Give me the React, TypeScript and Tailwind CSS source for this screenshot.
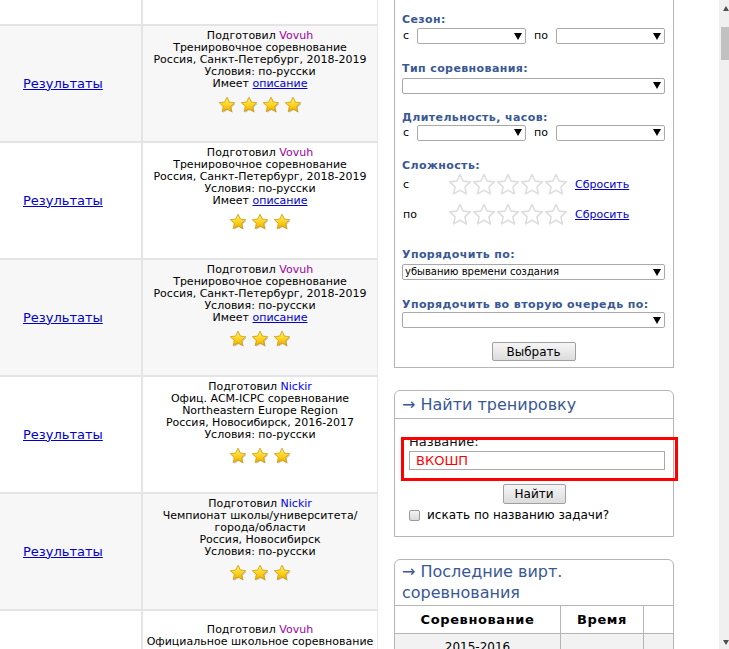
import React from 'react'

const rows = [
  { gray: true, author: 'Vovuh', authorColor: 'text-[#a000a0]', lines: ['Тренировочное соревнование', 'Россия, Санкт-Петербург, 2018-2019', 'Условия: по-русски'], desc: true, stars: 4, pt: 'pt-[4px]', link: true },
  { gray: false, author: 'Vovuh', authorColor: 'text-[#a000a0]', lines: ['Тренировочное соревнование', 'Россия, Санкт-Петербург, 2018-2019', 'Условия: по-русски'], desc: true, stars: 3, pt: 'pt-[4px]', link: true },
  { gray: true, author: 'Vovuh', authorColor: 'text-[#a000a0]', lines: ['Тренировочное соревнование', 'Россия, Санкт-Петербург, 2018-2019', 'Условия: по-русски'], desc: true, stars: 3, pt: 'pt-[4px]', link: true },
  { gray: false, author: 'Nickir', authorColor: 'text-[#0000ff]', lines: ['Офиц. ACM-ICPC соревнование', 'Northeastern Europe Region', 'Россия, Новосибирск, 2016-2017', 'Условия: по-русски'], desc: false, stars: 3, pt: 'pt-[4px]', link: true },
  { gray: true, author: 'Nickir', authorColor: 'text-[#0000ff]', lines: ['Чемпионат школы/университета/', 'города/области', 'Россия, Новосибирск', 'Условия: по-русски'], desc: false, stars: 3, pt: 'pt-[4px]', link: true },
  { gray: false, author: 'Vovuh', authorColor: 'text-[#a000a0]', lines: ['Официальное школьное соревнование'], desc: false, stars: 0, pt: 'pt-[13px]', link: false },
]

const STAR = 'M12 1.5l3.1 6.6 7.2.8-5.4 4.9 1.5 7.1L12 17.3l-6.4 3.6 1.5-7.1-5.4-4.9 7.2-.8z'

function GoldStar() {
  return (
    <svg width="18" height="18" viewBox="0 0 24 24">
      <defs>
        <linearGradient id="gold" x1="0" y1="0" x2="0" y2="1">
          <stop offset="0" stopColor="#fff27a" />
          <stop offset="0.55" stopColor="#ffd21c" />
          <stop offset="1" stopColor="#f0a800" />
        </linearGradient>
      </defs>
      <path d={STAR} fill="#9a9a9a" opacity="0.55" transform="translate(1.2 1.4)" />
      <path d={STAR} fill="url(#gold)" stroke="#c99a00" strokeWidth="1" strokeLinejoin="round" />
    </svg>
  )
}

function EmptyStar() {
  return (
    <svg width="24" height="24" viewBox="0 0 24 24">
      <path d={STAR} fill="#fff" stroke="#dedede" strokeWidth="1.6" strokeLinejoin="round" />
    </svg>
  )
}

function Select({ w, text }: { w: string; text?: string }) {
  return (
    <div className={`${w} h-[16px] border border-[#a9a9a9] rounded-[2px] bg-white flex items-center justify-between pl-[2px] pr-[3px]`}>
      <span className="text-[10px] leading-none text-black">{text}</span>
      <svg width="8" height="7" viewBox="0 0 8 7"><path d="M0 0h8L4 7z" fill="#000" /></svg>
    </div>
  )
}

function Label({ children, className = '' }: { children: React.ReactNode; className?: string }) {
  return <div className={`text-[11px] leading-[13px] font-bold text-[#3a5896] tracking-[0.4px] ${className}`}>{children}</div>
}

function StarPicker({ label, className = '' }: { label: string; className?: string }) {
  return (
    <div className={`flex items-center h-[24px] ${className}`}>
      <span className="w-[46px] text-[11px] text-black pl-[1px]">{label}</span>
      <div className="flex">
        {[0, 1, 2, 3, 4].map(i => <EmptyStar key={i} />)}
      </div>
      <a className="ml-[7px] text-[11px] text-[#0000cc] underline">Сбросить</a>
    </div>
  )
}

export default function App() {
  return (
    <div className="w-[729px] h-[649px] overflow-hidden bg-white flex font-['DejaVu_Sans',Verdana,sans-serif]">
      {/* left results table */}
      <div className="w-[378px] flex flex-col border-r border-[#e8e8e8] shrink-0">
        <div className="h-[26px] flex border-b-2 border-[#e4e4e4] shrink-0">
          <div className="w-[143px] border-r-2 border-[#e4e4e4]" />
          <div className="flex-1" />
        </div>
        {rows.map((r, i) => (
          <div key={i} className={`h-[117px] shrink-0 flex border-b-2 border-[#e4e4e4] ${r.gray ? 'bg-[#f7f7f7]' : 'bg-white'}`}>
            <div className="w-[143px] border-r-2 border-[#e4e4e4] flex items-center pl-[23px]">
              {r.link && <a className="text-[13px] text-[#0000cc] underline">Результаты</a>}
            </div>
            <div className={`flex-1 flex flex-col items-center text-center text-[11px] leading-[12px] text-black ${r.pt}`}>
              <div>Подготовил <span className={r.authorColor}>{r.author}</span></div>
              {r.lines.map(l => <div key={l}>{l}</div>)}
              {r.desc && <div>Имеет <a className="text-[#0000cc] underline">описание</a></div>}
              {r.stars > 0 && (
                <div className="flex gap-[4px] mt-[6px]">
                  {Array.from({ length: r.stars }).map((_, k) => <GoldStar key={k} />)}
                </div>
              )}
            </div>
          </div>
        ))}
      </div>

      {/* right sidebar */}
      <div className="w-[341px] shrink-0 pl-[16px] flex flex-col">
        <div className="w-[280px] border-x border-b border-[#b5b5b5] pl-[7px] pr-[8px] pt-[13px] pb-[6px]">
          <Label>Сезон:</Label>
          <div className="flex items-center mt-[2px] text-[11px] text-black">
            <span className="w-[15px] pl-[1px]">с</span>
            <Select w="w-[109px]" />
            <span className="w-[22px] ml-[8px]">по</span>
            <Select w="w-[109px]" />
          </div>
          <Label className="mt-[17px]">Тип соревнования:</Label>
          <Select w="w-[263px] mt-[3px]" />
          <Label className="mt-[17px]">Длительность, часов:</Label>
          <div className="flex items-center mt-[1px] text-[11px] text-black">
            <span className="w-[15px] pl-[1px]">с</span>
            <Select w="w-[109px]" />
            <span className="w-[22px] ml-[8px]">по</span>
            <Select w="w-[109px]" />
          </div>
          <Label className="mt-[18px]">Сложность:</Label>
          <StarPicker label="с" className="mt-[1px]" />
          <StarPicker label="по" className="mt-[6px]" />
          <Label className="mt-[21px]">Упорядочить по:</Label>
          <Select w="w-[263px] mt-[3px]" text="убыванию времени создания" />
          <Label className="mt-[18px]">Упорядочить во вторую очередь по:</Label>
          <Select w="w-[263px] mt-[1px]" />
          <div className="flex justify-center mt-[14px]">
            <button className="w-[84px] h-[19px] border border-[#a0a0a0] rounded-[2px] bg-gradient-to-b from-[#f6f6f6] to-[#dcdcdc] text-[12px] leading-none text-black">Выбрать</button>
          </div>
        </div>

        <div className="relative w-[280px] mt-[22px] border border-[#b5b5b5] rounded-t-[6px]">
          <div className="h-[28px] border-b border-[#b5b5b5] pl-[7px] flex items-center text-[16px] text-[#3a5896]">→ Найти тренировку</div>
          <div className="pl-[14px] pr-[8px] pt-[15px] pb-[12px]">
            <div className="text-[13px] leading-[16px] text-[#111]">Название:</div>
            <div className="w-[256px] h-[19px] border border-[#a9a9a9] mt-[1px] pl-[6px] flex items-center text-[13px] text-[#ff0000]">ВКОШП</div>
            <div className="flex justify-center mt-[14px] pr-[6px]">
              <button className="w-[63px] h-[20px] border border-[#a0a0a0] rounded-[2px] bg-gradient-to-b from-[#f6f6f6] to-[#dcdcdc] text-[12px] leading-none text-black">Найти</button>
            </div>
            <div className="flex items-center mt-[2px]">
              <span className="w-[11px] h-[11px] border border-[#9a9a9a] rounded-[2px] bg-gradient-to-b from-[#f4f4f4] to-[#dadada]" />
              <span className="ml-[7px] text-[12px] text-black">искать по названию задачи?</span>
            </div>
          </div>
          <div className="absolute left-[6px] top-[46px] w-[277px] h-[44px] border-[3px] border-[#ff0000]" />
        </div>

        <div className="w-[280px] mt-[22px] border border-[#b5b5b5] rounded-t-[6px]">
          <div className="border-b border-[#b5b5b5] pl-[7px] pt-[1px] pb-[2px] text-[16px] leading-[21px] text-[#3a5896]">
            → Последние вирт.<br />соревнования
          </div>
          <div className="flex h-[28px] border-b border-[#b5b5b5] text-[13px] font-bold tracking-[0.6px] text-black">
            <div className="w-[166px] border-r border-[#b5b5b5] flex items-center justify-center">Соревнование</div>
            <div className="w-[83px] border-r border-[#b5b5b5] flex items-center justify-center">Время</div>
            <div className="flex-1" />
          </div>
          <div className="flex h-[40px] bg-[#f2f2f2] text-[12px] text-black">
            <div className="w-[166px] border-r border-[#b5b5b5] flex justify-center pt-[4px]">2015-2016</div>
            <div className="w-[83px] border-r border-[#b5b5b5]" />
            <div className="flex-1" />
          </div>
        </div>
      </div>

      {/* scrollbar edge */}
      <div className="w-[10px] shrink-0 bg-[#f0f0f0] flex flex-col items-end">
        <svg className="mt-[6px]" width="6" height="5" viewBox="0 0 6 5"><path d="M3 0l3 5H0z" fill="#505050" /></svg>
        <div className="w-[8px] h-[33px] mt-[16px] bg-[#c1c1c1]" />
        <div className="flex-1" />
        <svg className="mb-[4px]" width="6" height="5" viewBox="0 0 6 5"><path d="M0 0h6L3 5z" fill="#505050" /></svg>
      </div>
    </div>
  )
}
